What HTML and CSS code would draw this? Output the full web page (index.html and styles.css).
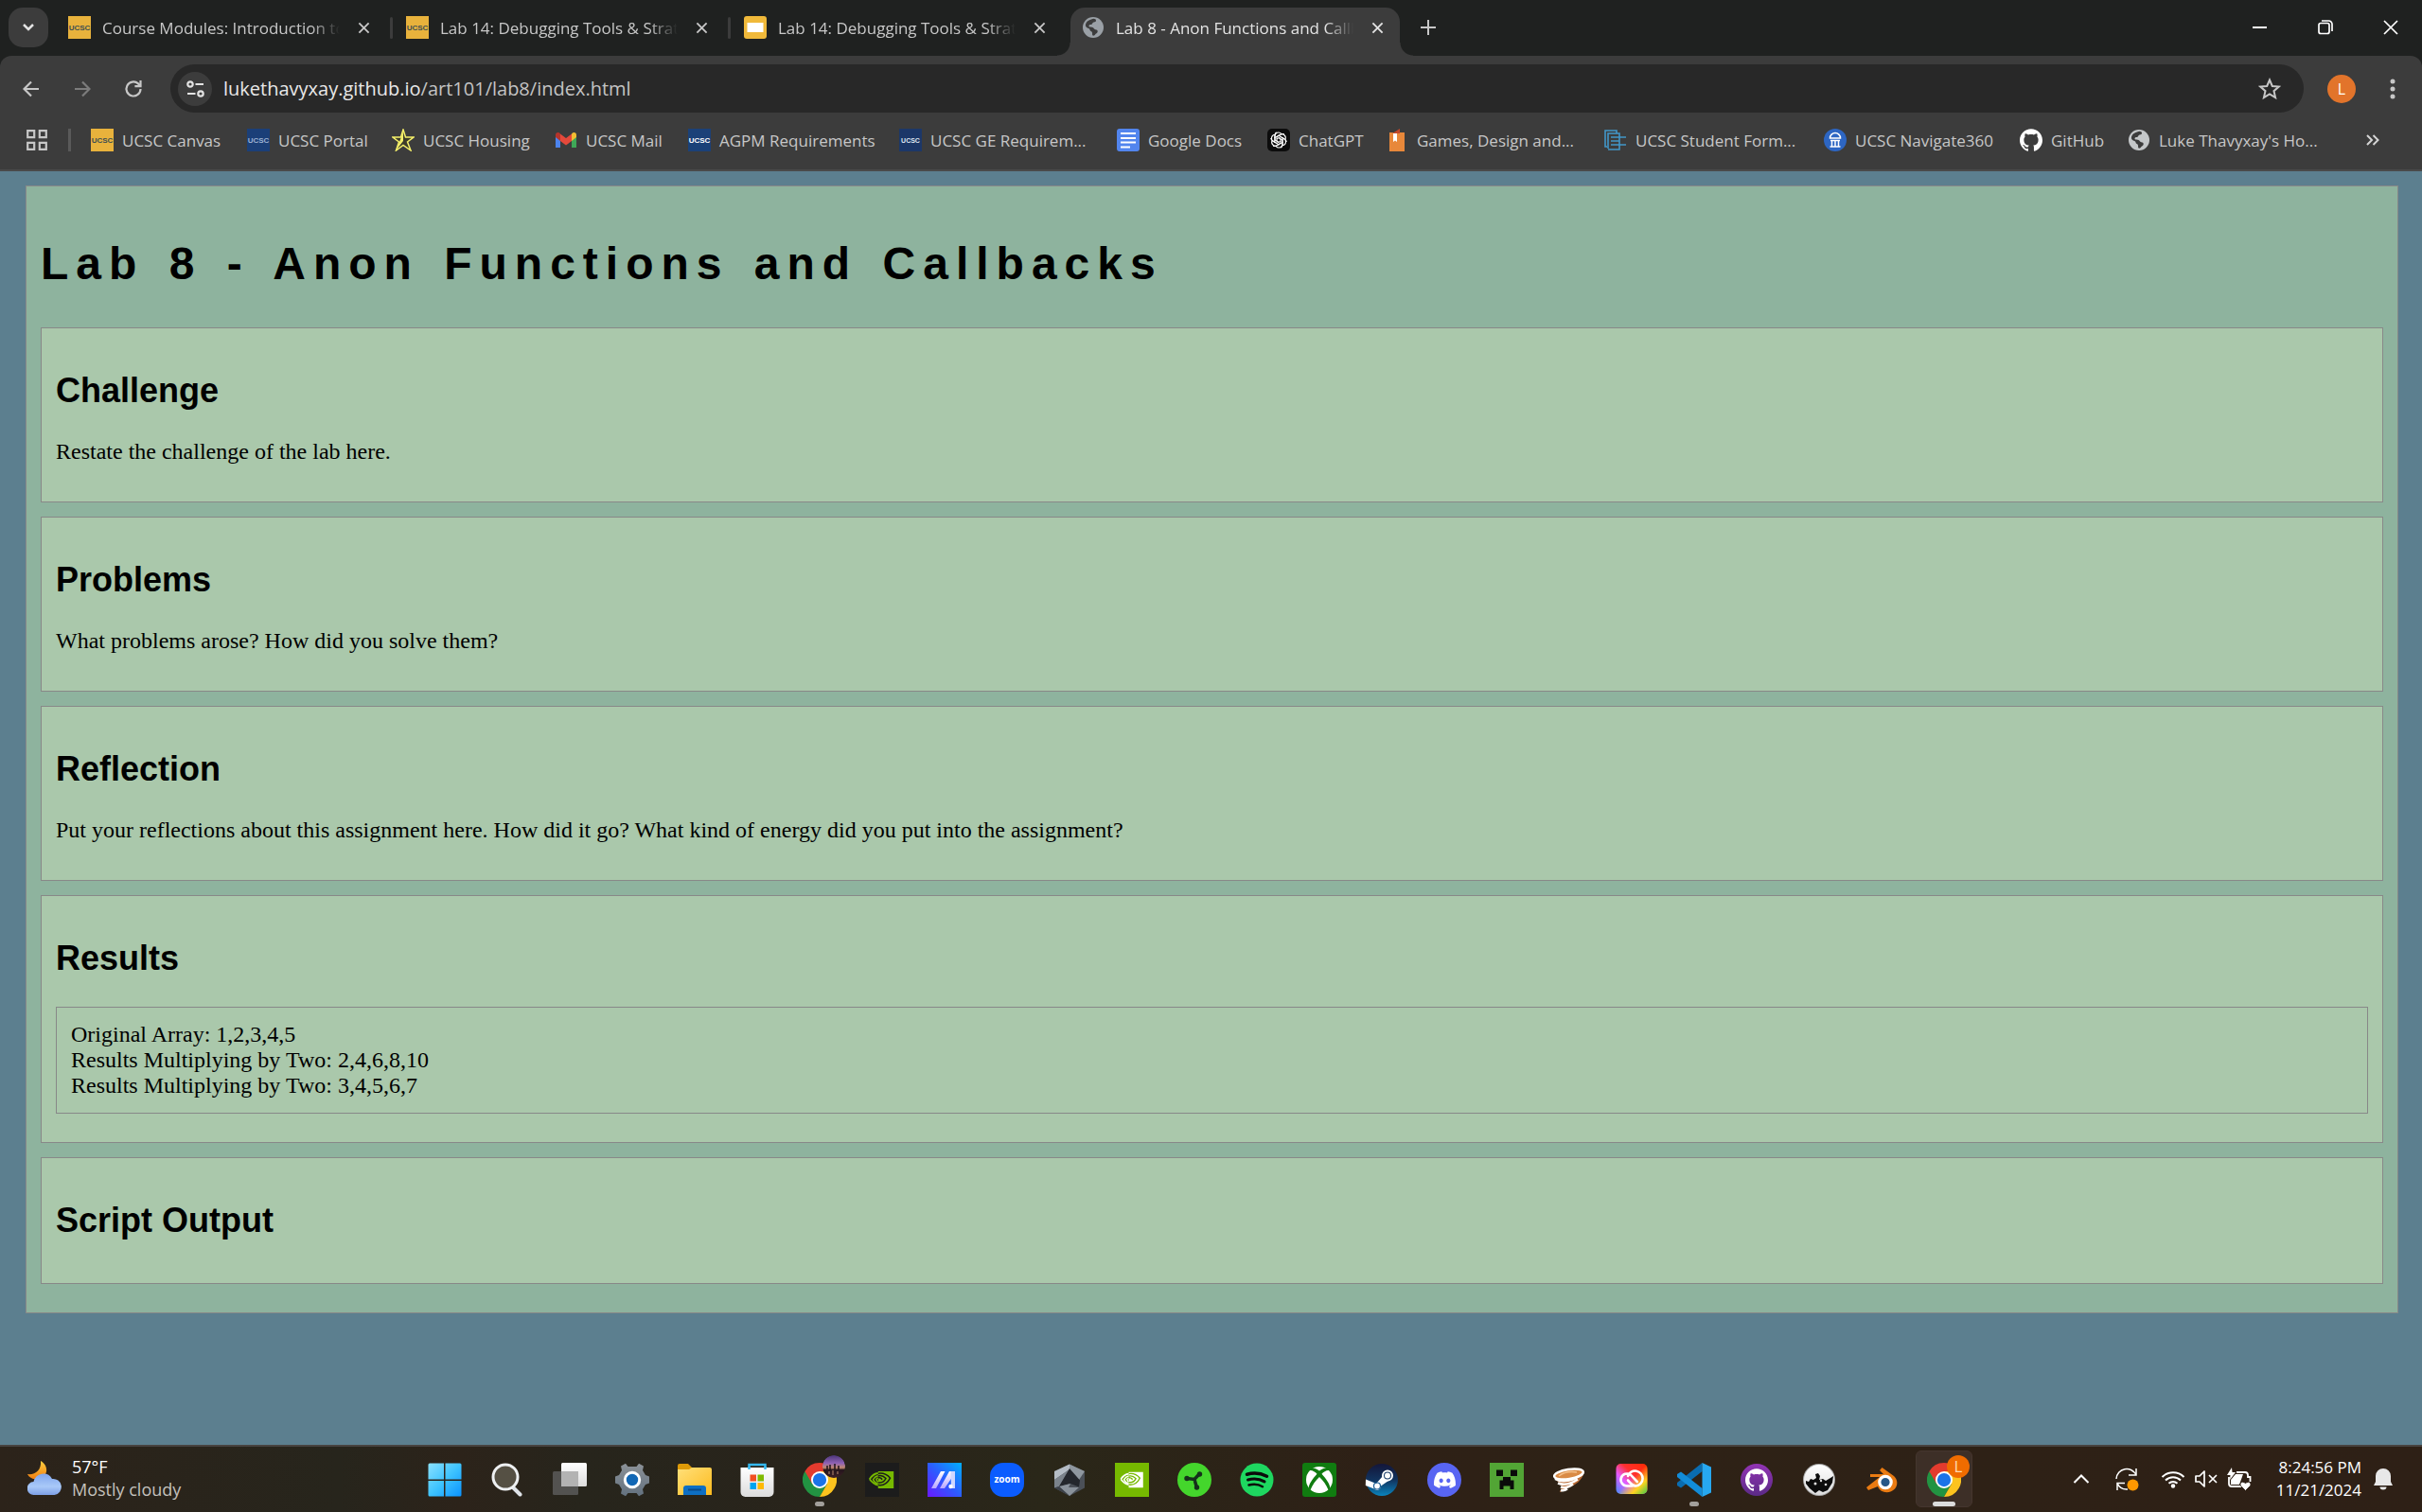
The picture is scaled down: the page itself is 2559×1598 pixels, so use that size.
FILE: index.html
```html
<!DOCTYPE html>
<html lang="en">
<head>
<meta charset="utf-8">
<title>Lab 8 - Anon Functions and Callbacks</title>
<link rel="stylesheet" href="styles.css">
</head>
<body>
<svg class="defs" aria-hidden="true">
  <defs>
    <linearGradient id="gWin" x1="0" y1="0" x2="1" y2="1"><stop offset="0" stop-color="#8be1ff"/><stop offset=".5" stop-color="#3fc4ff"/><stop offset="1" stop-color="#0a93ff"/></linearGradient>
    <linearGradient id="gWhite" x1="0" y1="0" x2="0" y2="1"><stop offset="0" stop-color="#fff"/><stop offset="1" stop-color="#dcdcdc"/></linearGradient>
    <linearGradient id="gFolder" x1="0" y1="0" x2="1" y2="1"><stop offset="0" stop-color="#ffe07a"/><stop offset="1" stop-color="#fdbb1f"/></linearGradient>
    <linearGradient id="gGear" x1="0" y1="0" x2="0" y2="1"><stop offset="0" stop-color="#8c9298"/><stop offset="1" stop-color="#63717f"/></linearGradient>
    <linearGradient id="gArmoury" x1="0" y1="1" x2="1" y2="0"><stop offset="0" stop-color="#6a18ff"/><stop offset=".5" stop-color="#2c5cff"/><stop offset="1" stop-color="#00b0ff"/></linearGradient>
    <linearGradient id="gSlash" x1="0" y1="0" x2="0" y2="1"><stop offset="0" stop-color="#fff"/><stop offset="1" stop-color="#b9a6ff"/></linearGradient>
    <linearGradient id="gSteam" x1="0" y1="0" x2="0" y2="1"><stop offset="0" stop-color="#14163a"/><stop offset=".5" stop-color="#11335e"/><stop offset="1" stop-color="#0a84bd"/></linearGradient>
    <linearGradient id="gCC" x1="0" y1="1" x2="1" y2="0"><stop offset="0" stop-color="#3f8cff"/><stop offset=".35" stop-color="#e45bff"/><stop offset=".6" stop-color="#ff3030"/><stop offset="1" stop-color="#ff2a00"/></linearGradient>
    <linearGradient id="gCC2" x1="0" y1="0" x2="1" y2="1"><stop offset=".5" stop-color="#ffd21f" stop-opacity="0"/><stop offset=".75" stop-color="#ffd21f"/><stop offset="1" stop-color="#39c84a"/></linearGradient>
    <linearGradient id="gCloud" x1="0" y1="0" x2="0" y2="1"><stop offset="0" stop-color="#7fa5ee"/><stop offset=".6" stop-color="#a9c9f8"/><stop offset="1" stop-color="#7d9fe6"/></linearGradient>
    <linearGradient id="gMoon" x1="0" y1="0" x2="0" y2="1"><stop offset="0" stop-color="#ffcf3f"/><stop offset="1" stop-color="#f07f12"/></linearGradient>
    <linearGradient id="gDusk" x1="0" y1="0" x2="0" y2="1"><stop offset="0" stop-color="#4b3578"/><stop offset=".35" stop-color="#8f62b5"/><stop offset=".55" stop-color="#c38a70"/><stop offset=".65" stop-color="#24151c"/><stop offset="1" stop-color="#3c1f26"/></linearGradient>
    <linearGradient id="gPurple" x1="0" y1="0" x2="0" y2="1"><stop offset="0" stop-color="#9234b4"/><stop offset="1" stop-color="#5b2a86"/></linearGradient>
    <symbol id="x" viewBox="0 0 14 14"><path d="M1.500 1.500l11 11M12.500 1.500l-11 11" fill="none" stroke="currentColor" stroke-width="2"/></symbol>
    <symbol id="globe" viewBox="0 0 24 24"><circle cx="12" cy="12" r="11" fill="currentColor"/><path d="M10 3.500c2.500-1.500 5-.5 5 1s-1 1.700-2.500 2c-1.600.3-1 2.300-2.500 2.500-1.500.2-2.500 0-2.500 1.500s2.500.8 4 1.500c1.400.6 1.300 2 2.800 2.200 1.500.1 2.600.6 2.400 2.200-.2 1.700-2 1.800-2.600 3.200-.4 1-1.300 1.400-2.400 1-.9-.4-.5-2-.7-3.200-.3-1.500-2.300-1.400-2.500-3-.1-1.300-2.400-1.200-3.700-2.600-1.400-1.500-1-3.300.2-5.300C6 4.900 8 4.200 10 3.500z" fill="var(--hole)"/></symbol>
    <symbol id="github" viewBox="0 0 24 24"><path fill="currentColor" d="M12 .297c-6.630 0-12 5.373-12 12 0 5.303 3.438 9.800 8.205 11.385.6.113.82-.258.82-.577 0-.285-.01-1.040-.015-2.040-3.338.724-4.042-1.610-4.042-1.610C4.422 18.070 3.633 17.700 3.633 17.700c-1.087-.744.084-.729.084-.729 1.205.084 1.838 1.236 1.838 1.236 1.070 1.835 2.809 1.305 3.495.998.108-.776.417-1.305.76-1.605-2.665-.3-5.466-1.332-5.466-5.930 0-1.310.465-2.380 1.235-3.220-.135-.303-.54-1.523.105-3.176 0 0 1.005-.322 3.300 1.230.96-.267 1.980-.399 3-.405 1.020.006 2.040.138 3 .405 2.280-1.552 3.285-1.230 3.285-1.230.645 1.653.24 2.873.12 3.176.765.84 1.230 1.910 1.230 3.220 0 4.610-2.805 5.625-5.475 5.920.42.36.81 1.096.81 2.220 0 1.606-.015 2.896-.015 3.286 0 .315.21.69.825.57C20.565 22.092 24 17.592 24 12.297c0-6.627-5.373-12-12-12"/></symbol>
    <symbol id="chrome" viewBox="0 0 48 48"><path d="M24 24L3.215 12A24 24 0 0 0 24 48l10.400-18z" fill="#229342"/><path d="M24 24V12h20.785A24 24 0 0 1 24 48l10.400-18z" fill="#fcc31e"/><path d="M24 12h20.785A24 24 0 0 0 3.215 12l10.400 18z" fill="#e33b2e"/><circle cx="24" cy="24" r="12" fill="#fff"/><circle cx="24" cy="24" r="9.500" fill="#1a73e8"/></symbol>
    <symbol id="nveye" viewBox="0 0 36 26"><path d="M13 1h22v24H13z" fill="var(--a)"/><path d="M1 12C5 6 10 3.500 16 3.500c6 0 11 3 14 7-3 6-8 10-14 10S5 17 1 12z" fill="none" stroke="var(--b)" stroke-width="2"/><path d="M1 12C5 6 9 4 13 3.700M13 20.500C8 19.500 4 16 1 12" fill="none" stroke="var(--a)" stroke-width="2.500"/><path d="M6 12.500c3-4 6-5.500 10-5.500 4 0 6 2 8 4-2 4-5 6-8.500 6-3 0-5-2-5-4.500 1-2 3-3 5-2.500 2 .4 2.500 2 3.500 2.500" fill="none" stroke="var(--b)" stroke-width="2"/><path d="M13 7.200c-3 .5-5 2-7 5.300 1.500 3.500 4 5.500 7 5.800M13 10.200c-1.500.5-2 1.300-2.500 2.300.4 1.500 1.200 2.700 2.500 3.600" fill="none" stroke="var(--a)" stroke-width="2"/></symbol>
  </defs>
</svg>

<header class="browser">
  <div class="tabstrip">
    <button class="tabsearch" aria-label="Search tabs"><svg width="14" height="10" viewBox="0 0 14 10"><path d="M2 2l5 5 5-5" fill="none" stroke="#e3e3e3" stroke-width="2.500"/></svg></button>
    <div class="tabs">
      <div class="tab">
        <svg class="fav" viewBox="0 0 24 24"><path fill="#e8b23c" d="M0 0h24v24H0z"/><text x="12" y="15" class="ucsc ucsc-dark">UCSC</text></svg>
        <span class="title">Course Modules: Introduction to</span>
        <button class="close" aria-label="Close tab"><svg width="13" height="13"><use href="#x"/></svg></button>
      </div>
      <div class="tab">
        <svg class="fav" viewBox="0 0 24 24"><path fill="#e8b23c" d="M0 0h24v24H0z"/><text x="12" y="15" class="ucsc ucsc-dark">UCSC</text></svg>
        <span class="title">Lab 14: Debugging Tools &amp; Strategies</span>
        <button class="close" aria-label="Close tab"><svg width="13" height="13"><use href="#x"/></svg></button>
      </div>
      <div class="tab last">
        <svg class="fav" viewBox="0 0 24 24"><rect width="24" height="24" rx="3" fill="#f0b93a"/><rect x="3.500" y="7" width="17" height="10" fill="#fff"/></svg>
        <span class="title">Lab 14: Debugging Tools &amp; Strategies</span>
        <button class="close" aria-label="Close tab"><svg width="13" height="13"><use href="#x"/></svg></button>
      </div>
      <div class="tab active">
        <svg class="fav globe" viewBox="0 0 24 24"><use href="#globe"/></svg>
        <span class="title">Lab 8 - Anon Functions and Callbacks</span>
        <button class="close" aria-label="Close tab"><svg width="13" height="13"><use href="#x"/></svg></button>
      </div>
    </div>
    <button class="newtab" aria-label="New tab"><svg width="16" height="16" viewBox="0 0 16 16"><path d="M8 0v16M0 8h16" stroke="#c7c7c7" stroke-width="2"/></svg></button>
    <div class="wincontrols">
      <button aria-label="Minimize"><svg width="16" height="16" viewBox="0 0 16 16"><path d="M0 8h15" stroke="#fff" stroke-width="2"/></svg></button>
      <button aria-label="Restore"><svg width="16" height="16" viewBox="0 0 16 16"><rect x="1" y="3.500" width="11" height="11" rx="2" fill="none" stroke="#fff" stroke-width="1.700"/><path d="M4 1h7.500A3.500 3.500 0 0 1 15 4.500V12" fill="none" stroke="#fff" stroke-width="1.700"/></svg></button>
      <button aria-label="Close"><svg width="16" height="16" viewBox="0 0 16 16"><path d="M1 1l14 14M15 1L1 15" stroke="#fff" stroke-width="1.700"/></svg></button>
    </div>
  </div>

  <div class="toolbar">
    <button class="nav" aria-label="Back"><svg width="18" height="18" viewBox="0 0 18 18"><path d="M17 9H2M9 1.500L1.500 9 9 16.500" fill="none" stroke="#c7c7c7" stroke-width="2.200"/></svg></button>
    <button class="nav" aria-label="Forward"><svg width="18" height="18" viewBox="0 0 18 18"><path d="M1 9h15M9 1.500L16.500 9 9 16.500" fill="none" stroke="#7c7c7c" stroke-width="2.200"/></svg></button>
    <button class="nav" aria-label="Reload"><svg width="20" height="20" viewBox="0 0 20 20"><path d="M17.500 10A7.500 7.500 0 1 1 15 4.400L17.500 7" fill="none" stroke="#c7c7c7" stroke-width="2.200"/><path d="M18.600 1v7.200h-7.200V6h5V1z" fill="#c7c7c7"/></svg></button>
    <div class="omnibox">
      <button class="siteinfo" aria-label="Site information"><svg width="19" height="18" viewBox="0 0 19 18"><g fill="none" stroke="#e3e3e3" stroke-width="2.200"><circle cx="4" cy="4" r="2.700"/><path d="M9.500 4H18M1 14h8.500"/><circle cx="15" cy="14" r="2.700"/></g></svg></button>
      <div class="url">lukethavyxay.github.io<span>/art101/lab8/index.html</span></div>
      <button class="star" aria-label="Bookmark this tab"><svg width="24" height="24" viewBox="0 0 24 24"><path d="M12 2.500l2.800 6.500 7 .6-5.300 4.600 1.600 6.900-6.100-3.600-6.100 3.600 1.600-6.900L2.200 9.600l7-.6z" fill="none" stroke="#c7c7c7" stroke-width="2"/></svg></button>
    </div>
    <button class="avatar" aria-label="Profile">L</button>
    <button class="menu" aria-label="Menu"><svg width="6" height="22" viewBox="0 0 6 22"><g fill="#c7c7c7"><circle cx="3" cy="3" r="2.500"/><circle cx="3" cy="11" r="2.500"/><circle cx="3" cy="19" r="2.500"/></g></svg></button>
  </div>

  <nav class="bookmarks">
    <button class="apps" aria-label="Apps"><svg width="22" height="22" viewBox="0 0 22 22"><path d="M1.200 1.200h7v7h-7zM13.800 1.200h7v7h-7zM1.200 13.800h7v7h-7zM13.800 13.800h7v7h-7z" fill="none" stroke="#c7c7c7" stroke-width="2.200"/></svg></button>
    <div class="marks">
      <a href="#"><svg viewBox="0 0 24 24"><path fill="#e8b23c" d="M0 0h24v24H0z"/><text x="12" y="15" class="ucsc ucsc-dark">UCSC</text></svg>UCSC Canvas</a>
      <a href="#"><svg viewBox="0 0 24 24"><path fill="#1b3f78" d="M0 0h24v24H0z"/><text x="12" y="15" class="ucsc ucsc-soft">UCSC</text></svg>UCSC Portal</a>
      <a href="#"><svg viewBox="0 0 24 24"><path d="M12 1l2.500 8H23l-6.500 5L20 23l-8-5.500L4.500 23l3-9L1 9h8.500z" fill="#3e3d2a" stroke="#f5f06a" stroke-width="1.500"/><path d="M12 3v10l-7 9 3-8z" fill="#f5f06a"/></svg>UCSC Housing</a>
      <a href="#"><svg viewBox="0 0 24 24"><path fill="#4c84ee" d="M1 7v13h5V9z"/><path fill="#3fa757" d="M23 7v13h-5V9z"/><path fill="#f2bd32" d="M18 5.500c2-2.500 5-1.500 5 1V9l-5 4z"/><path fill="#b5342b" d="M1 9V6.500C1 4 4 3 6 5.500V13z"/><path fill="#e5493b" d="M6 5.500l6 4.500 6-4.500V13l-6 4.500L6 13z"/></svg>UCSC Mail</a>
      <a href="#"><svg viewBox="0 0 24 24"><path fill="#1b4178" d="M0 0h24v24H0z"/><text x="12" y="15" class="ucsc ucsc-white">UCSC</text></svg>AGPM Requirements</a>
      <a href="#"><svg viewBox="0 0 24 24"><path fill="#1c3768" d="M0 0h24v24H0z"/><text x="12" y="15" class="ucsc ucsc-small">UCSC</text></svg>UCSC GE Requirem...</a>
      <a href="#"><svg viewBox="0 0 24 24"><rect width="24" height="24" rx="3" fill="#5285ee"/><path d="M4 5h16M4 10h16M4 14.500h16M4 19.500h10" stroke="#fff" stroke-width="2"/></svg>Google Docs</a>
      <a href="#"><svg viewBox="0 0 24 24"><rect width="24" height="24" rx="5" fill="#0c0c0c"/><g fill="none" stroke="#fff" stroke-width="1.100"><path id="k" d="M7.800 15V8a4 4 0 0 1 7-2.600M10 13.200V8.700l4.500-2.600a4 4 0 0 1 3.400-.3"/><use href="#k" transform="rotate(60 12 12)"/><use href="#k" transform="rotate(120 12 12)"/><use href="#k" transform="rotate(180 12 12)"/><use href="#k" transform="rotate(240 12 12)"/><use href="#k" transform="rotate(300 12 12)"/></g></svg>ChatGPT</a>
      <a href="#"><svg viewBox="0 0 24 24"><path fill="#e8883a" d="M4 4h16v20H4z"/><path fill="#c2482a" d="M7 5l8-5v5z"/><path fill="#fff" d="M8 5h4v9l-2-1.500L8 14z"/></svg>Games, Design and...</a>
      <a href="#"><svg viewBox="0 0 24 24"><g fill="none" stroke="#4296c8" stroke-width="1.600"><path d="M3 19H1V2h12v3M4 21V5h12v17H4M7 9h16M7 13h9M7 17h16"/></g></svg>UCSC Student Form...</a>
      <a href="#"><svg viewBox="0 0 24 24"><circle cx="12" cy="12" r="12" fill="#2d66c3"/><path d="M6.500 10a5.500 5.500 0 0 1 11 0zM7 12.500h10M6.500 19h11M8.500 12v6.500M12 12v6.500M15.500 12v6.500" fill="none" stroke="#fff" stroke-width="1.500"/></svg>UCSC Navigate360</a>
      <a href="#"><svg class="white" viewBox="0 0 24 24"><use href="#github"/></svg>GitHub</a>
      <a href="#"><svg class="globe light" viewBox="0 0 24 24"><use href="#globe"/></svg>Luke Thavyxay's Ho...</a>
    </div>
    <button class="more" aria-label="More bookmarks"><svg width="14" height="12" viewBox="0 0 14 12"><path d="M1 1l5 5-5 5M7.500 1l5 5-5 5" fill="none" stroke="#d5d5d5" stroke-width="2"/></svg></button>
  </nav>
</header>

<main class="page">
  <div class="content">
    <h1>Lab 8 - Anon Functions and Callbacks</h1>
    <section><h2>Challenge</h2><p>Restate the challenge of the lab here.</p></section>
    <section><h2>Problems</h2><p>What problems arose? How did you solve them?</p></section>
    <section><h2>Reflection</h2><p>Put your reflections about this assignment here. How did it go? What kind of energy did you put into the assignment?</p></section>
    <section><h2>Results</h2><div class="output">Original Array: 1,2,3,4,5<br>Results Multiplying by Two: 2,4,6,8,10<br>Results Multiplying by Two: 3,4,5,6,7</div></section>
    <section><h2>Script Output</h2></section>
  </div>
</main>

<footer class="taskbar">
  <button class="weather">
    <svg width="36" height="36" viewBox="0 0 36 36"><path d="M14 0c9 5 8 17-2 19-6 1-10-1-12-5 8 1 15-4 14-14z" fill="url(#gMoon)"/><path d="M7 36a7 7 0 0 1-.5-14A10.500 10.500 0 0 1 26 19a8.500 8.500 0 1 1 2.500 17z" fill="url(#gCloud)"/></svg>
    <span class="lines"><span>57°F</span><span class="dim">Mostly cloudy</span></span>
  </button>
  <div class="dock">
    <button aria-label="Start"><svg viewBox="0 0 36 36"><path d="M0.500 2a1.500 1.500 0 0 1 1.500-1.500h15v17H.5zM18.500.5H34a1.500 1.500 0 0 1 1.500 1.500v15.500h-17zM.5 19H17v16.500H2A1.500 1.500 0 0 1 .5 34zM18.500 19h17v15a1.500 1.500 0 0 1-1.500 1.500H18.500z" fill="url(#gWin)"/></svg></button>
    <button aria-label="Search"><svg viewBox="0 0 36 36"><path d="M23 25l8.500 8.500" stroke="#dfe3e8" stroke-width="4" stroke-linecap="round"/><circle cx="16" cy="15" r="13" fill="#555044" stroke="#eef0f2" stroke-width="3"/></svg></button>
    <button aria-label="Task View"><svg viewBox="0 0 36 36"><rect x="9" y="0" width="27" height="25" rx="1.500" fill="url(#gWhite)"/><rect x="0" y="9" width="27" height="25" rx="1.500" fill="#5e5e5e" opacity=".8"/><path d="M9 9h18v16H9z" fill="#b3b3b3"/></svg></button>
    <button aria-label="Settings"><svg viewBox="0 0 36 36"><path d="M13.500 4L11 .8 6 3.500l1 4.500-3 5-4 1.500v7L4 23l3 5-1 4.500 5 2.700 2.500-3.200h9l2.500 3.200 5-2.700-1-4.500 3-5 4-1.500v-7L32 13l-3-5 1-4.500L25 .8 22.500 4z" fill="url(#gGear)"/><circle cx="18" cy="18" r="7.700" fill="#1167b5" stroke="#fff" stroke-width="3"/></svg></button>
    <button aria-label="File Explorer"><svg viewBox="0 0 36 36"><path d="M0 3a2 2 0 0 1 2-2h9l4 4v5H0z" fill="#dd9a08"/><path d="M0 7h12l3-2h19a2 2 0 0 1 2 2v27H0z" fill="url(#gFolder)"/><path d="M6 34V27a3 3 0 0 1 3-3h18a3 3 0 0 1 3 3v7z" fill="#0d6fc4"/><path d="M11 28.500h14" stroke="#0a4a8a" stroke-width="2"/></svg></button>
    <button aria-label="Microsoft Store"><svg viewBox="0 0 36 36"><path d="M9.500 7V2h17v5" fill="none" stroke="#35b8ee" stroke-width="2.500"/><path d="M.5 5h35v26a5 5 0 0 1-5 5h-25a5 5 0 0 1-5-5z" fill="url(#gWhite)"/><path d="M9.500 7V4M26.500 7V4" stroke="#35b8ee" stroke-width="2.500"/><path d="M10.500 12.500H17v7h-6.500z" fill="#f25022"/><path d="M18.500 12.500H25v7h-6.500z" fill="#7fba00"/><path d="M10.500 21H17v7h-6.500z" fill="#00a4ef"/><path d="M18.500 21H25v7h-6.500z" fill="#ffb900"/></svg></button>
    <button class="running" aria-label="Google Chrome"><svg viewBox="0 0 36 36"><use href="#chrome"/></svg><svg class="badge" viewBox="0 0 24 24"><circle cx="12" cy="12" r="12" fill="url(#gDusk)"/><path d="M5 11v4M8 10v6M13 9v6M17 11v4" stroke="#1c1218" stroke-width="1.500"/><path d="M7 17v3M11 16v5M16 17v3" stroke="#b98a70" stroke-width="1"/></svg></button>
    <button aria-label="NVIDIA Control Panel"><svg viewBox="0 0 36 36"><path fill="#1c1c1c" d="M0 0h36v36H0z"/><svg class="nv-green" x="4" y="8" width="27" height="20" viewBox="0 0 36 26"><use href="#nveye"/></svg></svg></button>
    <button aria-label="MyASUS"><svg viewBox="0 0 36 36"><path fill="url(#gArmoury)" d="M0 0h36v36H0z"/><path d="M4 27L14 9h4.500L9 27zM13 27L23 9h6v6l-3.500 1L18 27z" fill="url(#gSlash)"/><path d="M24.500 9H29v18h-4z" fill="#cfd6ff"/><circle cx="24.500" cy="25" r="2.200" fill="#fff"/></svg></button>
    <button aria-label="Zoom"><svg viewBox="0 0 36 36"><rect width="36" height="36" rx="14" fill="#0b5cff"/><text x="18" y="21" class="zoomtext">zoom</text></svg></button>
    <button aria-label="Armoury Crate"><svg viewBox="0 0 36 36"><path d="M18 1.500l16 7.500v17.500L18 35 2 26.500V9z" fill="#4b5058"/><path d="M18 1.500L2 9v9l16-11z" fill="#b4bcc5"/><path d="M18 1.500L34 9l-6 9L18 7z" fill="#8f979f"/><path d="M2 18v8.500L7 25 18 7z" fill="#7b838c"/><path d="M18 6L7 25l12-3 9 3.500 1-7z" fill="#24272d"/><path d="M7 25l12-3-2 4 11 0-10 9z" fill="#8a929b"/><path d="M2 26.500L7 25l11 10z" fill="#3c4149"/></svg></button>
    <button aria-label="NVIDIA"><svg viewBox="0 0 36 36"><path fill="#76b900" d="M0 0h36v36H0z"/><svg class="nv-white" x="5" y="9" width="26" height="18" viewBox="0 0 36 26"><use href="#nveye"/></svg></svg></button>
    <button aria-label="Razer"><svg viewBox="0 0 36 36"><circle cx="18" cy="18" r="18" fill="#44d62c"/><path d="M10 16.500l8 1 5.500-6M18 17.500l2.500 9" fill="none" stroke="#15301b" stroke-width="3.500"/><circle cx="10" cy="16.500" r="2.700" fill="#15301b"/><circle cx="23.500" cy="12" r="2.700" fill="#15301b"/><circle cx="20.500" cy="26" r="2.700" fill="#15301b"/></svg></button>
    <button aria-label="Spotify"><svg viewBox="0 0 36 36"><circle cx="18" cy="18" r="17.500" fill="#1ed760"/><g fill="none" stroke="#0b0b0b" stroke-linecap="round"><path d="M7.500 12.200c7-2 14.500-1.300 21 2" stroke-width="3.500"/><path d="M8.500 18c6-1.700 12.500-1 17.500 1.900" stroke-width="3"/><path d="M9.500 23.500c5-1.400 10.500-.8 14.500 1.700" stroke-width="2.500"/></g></svg></button>
    <button aria-label="Xbox"><svg viewBox="0 0 36 36"><rect width="36" height="36" rx="3" fill="#107c10"/><circle cx="18" cy="18" r="14" fill="#fff"/><path d="M9.500 5.500C13 5 16 7 18 8.600 20 7 23 5 26.500 5.500l2 2.500c-3-.5-6 1.500-8 3.700 4.500 5 8.500 10.300 9 15.300l-2 1.800C25.500 23.500 22 18.500 18 15c-4 3.500-7.500 8.500-9.500 13.800L6.500 27c.5-5 4.500-10.300 9-15.300-2-2.200-5-4.200-8-3.700z" fill="#107c10"/></svg></button>
    <button aria-label="Steam"><svg viewBox="0 0 36 36"><circle cx="18" cy="18" r="17" fill="url(#gSteam)"/><path d="M1 17.500l11 4.500 7-8 6 5-8 5.500c0 4-4 6-7 3L.8 24z" fill="#fff"/><circle cx="24" cy="13.500" r="5" fill="#173a66" stroke="#fff" stroke-width="2"/><circle cx="24" cy="13.500" r="3" fill="#fff"/><circle cx="13" cy="24.500" r="3.500" fill="none" stroke="#1a5c92" stroke-width="1.200"/></svg></button>
    <button aria-label="Discord"><svg viewBox="0 0 36 36"><circle cx="18" cy="18" r="18" fill="#5865f2"/><svg x="7" y="6.500" width="23" height="23" viewBox="0 0 24 24"><path fill="#fff" fill-rule="evenodd" d="M20.317 4.370a19.791 19.791 0 0 0-4.885-1.515.074.074 0 0 0-.079.037c-.211.375-.445.865-.608 1.250-1.845-.276-3.680-.276-5.487 0-.164-.393-.406-.874-.618-1.250a.077.077 0 0 0-.079-.037 19.736 19.736 0 0 0-4.885 1.515C.533 9.046-.319 13.580.099 18.058c2.053 1.564 4.072 2.479 6.024 3.085.462-.63.957-1.323 1.310-2.022-.694-.353-1.316-.655-1.914-.998l.364-.419c3.928 1.793 8.258 1.783 12.139 0l.451.302c-.504.525-1.178.872-1.873 1.128.32.804.731 1.469 1.184 2.100 2.045-.578 4.034-1.494 6.087-3.001.5-5.177-.869-9.877-3.554-13.863zM8.020 15.331c-1.183 0-2.157-1.086-2.157-2.419s.956-2.419 2.157-2.419c1.211 0 2.176 1.095 2.157 2.419 0 1.333-.956 2.419-2.157 2.419zm7.975 0c-1.183 0-2.157-1.086-2.157-2.419s.955-2.419 2.157-2.419c1.211 0 2.176 1.095 2.157 2.419 0 1.333-.946 2.419-2.157 2.419z"/></svg></svg></button>
    <button aria-label="Minecraft Launcher"><svg viewBox="0 0 36 36"><path fill="#52a535" d="M0 0h36v36H0z"/><path fill="#0a0a0a" d="M7 7.500h7v6.500H7zM22 7.500h7v6.500h-7zM14 15h8v3.500h3.500V28h-4v-3.500h-7V28h-4v-9.500H14z"/></svg></button>
    <button aria-label="Tornado"><svg viewBox="0 0 36 36"><path d="M2 14c1 4 5 6 7 9 2 3 0 5-1 8 4-1 7-3 9-5 8-2 15-8 17-17z" fill="#b96a35"/><path d="M3 17c9 5 20 1 29-5M6 21.500c8 3 15 0 21-4M9 25.500c5 2 9 0 13-3M9 29c3 1 5 0 7-1.500" fill="none" stroke="#fff" stroke-width="2.500"/><ellipse cx="17.500" cy="12" rx="15.500" ry="5" transform="rotate(-9 17.500 12)" fill="#d98a45" stroke="#fff" stroke-width="2.500"/><path d="M7 14c5-4 12-5 19-4" stroke="#f4c08a" stroke-width="1.500" fill="none"/></svg></button>
    <button aria-label="Creative Cloud"><svg viewBox="0 0 36 36"><rect x="1.500" y="1" width="33" height="32" rx="5" fill="url(#gCC)"/><rect x="1.500" y="1" width="33" height="32" rx="5" fill="url(#gCC2)"/><path d="M18.500 24.500H13a6.500 6.500 0 1 1 3.800-11.800l7 7.300M14 14a8 8 0 1 1 8.500 10.500c-4 0-5-2.500-8.500-6" fill="none" stroke="#fff" stroke-width="2.600" stroke-linecap="round"/></svg></button>
    <button class="running" aria-label="Visual Studio Code"><svg viewBox="0 0 36 36"><path d="M26.500 0v9L4 26.500 0 24v-3z" fill="#0a6cb0"/><path d="M26.500 36v-9L4 9.500 0 12v3z" fill="#128cd9"/><path d="M26.500 0L36 4.500v27L26.500 36z" fill="#27a8f0"/></svg></button>
    <button aria-label="GitHub Desktop"><svg viewBox="0 0 36 36"><circle cx="18" cy="18" r="17" fill="url(#gPurple)"/><svg class="white" x="6" y="6" width="24" height="24" viewBox="0 0 24 24"><use href="#github"/></svg></svg></button>
    <button aria-label="Moon"><svg viewBox="0 0 36 36"><circle cx="18" cy="18" r="17" fill="#a9a9a9"/><circle cx="18" cy="18" r="16" fill="url(#gWhite)"/><path d="M4 19l3 1 2-3 3 1 3-2-1-4 3-1 2 3-1 4 4-1 3 2 5-3 3-2-1 7-5 8-5 2-4-2-4 3-6-5-4-5z" fill="#0c0c0c"/><circle cx="14" cy="22" r="1.500" fill="#ddd"/><circle cx="20" cy="19" r="1.200" fill="#ddd"/><circle cx="25" cy="23" r="1.300" fill="#ddd"/></svg></button>
    <button aria-label="Blender"><svg viewBox="0 0 36 36"><path d="M2 26l14-11H6v-3h14l-4-4 2.500-3L31 14c4 3.500 4.500 9.500 1 13.500-5 5.500-15 5-18-2.500L4 29z" fill="#ea7b12"/><circle cx="22" cy="20.500" r="6.200" fill="#265787" stroke="#fff" stroke-width="3.200"/></svg></button>
    <button class="running current" aria-label="Google Chrome, Lab 8"><svg viewBox="0 0 36 36"><use href="#chrome"/></svg><span class="badge letter">L</span></button>
  </div>
  <div class="tray">
    <button aria-label="Show hidden icons"><svg width="18" height="18" viewBox="0 0 18 18"><path d="M1.500 13L9 5.500l7.500 7.500" fill="none" stroke="#fff" stroke-width="2"/></svg></button>
    <button class="sync" aria-label="Updates"><svg width="26" height="26" viewBox="0 0 26 26"><path d="M2 13A11 11 0 0 1 23 9M23 2v7h-8M14 24A11 11 0 0 1 3 17.500M3 25v-7.500h8" fill="none" stroke="#fff" stroke-width="1.500"/><circle cx="19.500" cy="19.500" r="6" fill="#ff9800"/></svg></button>
    <button class="status" aria-label="Network, volume and battery">
      <svg width="26" height="20" viewBox="0 0 26 20"><g fill="none" stroke="#fff" stroke-width="2"><path d="M1.500 8a16.300 16.300 0 0 1 23 0M5 11.500a11.300 11.300 0 0 1 16 0M8.500 14.800a6.500 6.500 0 0 1 9 0"/></g><circle cx="13" cy="17.500" r="2.200" fill="#fff"/></svg>
      <svg width="24" height="20" viewBox="0 0 24 20"><path d="M1 7h4l5-5v16l-5-5H1z" fill="none" stroke="#fff" stroke-width="1.700" stroke-linejoin="round"/><path d="M15 6l8 8M23 6l-8 8" stroke="#fff" stroke-width="1.700"/></svg>
      <svg width="26" height="26" viewBox="0 0 26 26"><path d="M10 6h9a3 3 0 0 1 3 3v2h2.500v5M2 11v7a3 3 0 0 0 3 3h10" fill="none" stroke="#fff" stroke-width="1.800"/><path d="M9 8h8l-4 11H4v-5z" fill="#fff"/><path d="M5 1L0 9h3.500L3 14l6-8H5.500z" fill="#fff"/><path d="M19.500 25.500l-5-5c-1.800-3 1.500-6 5-3 3.500-3 6.800 0 5 3z" fill="#fff" stroke="#2e2016" stroke-width="1"/></svg>
    </button>
    <button class="clock lines"><span>8:24:56 PM</span><span>11/21/2024</span></button>
    <button aria-label="Notifications"><svg width="20" height="24" viewBox="0 0 20 24"><path d="M10 1a8 8 0 0 1 8 8v6l2 4H0l2-4V9a8 8 0 0 1 8-8zM6.500 20.500h7a3.500 3 0 0 1-7 0z" fill="#e8e8e8"/></svg></button>
  </div>
</footer>
</body>
</html>
```
FILE: styles.css
```css
* { box-sizing: border-box; }
body {
  margin: 0;
  min-height: 100vh;
  display: flex;
  flex-direction: column;
  background: #5c7f8f;
  font-family: "Liberation Serif", serif;
}
button {
  margin: 0;
  padding: 0;
  border: 0;
  background: none;
  color: inherit;
  font: inherit;
  display: flex;
  align-items: center;
  justify-content: center;
  flex: none;
}
svg { display: block; flex: none; }
.defs { width: 0; height: 0; position: absolute; }
.ucsc { font: bold 8px "Liberation Sans", sans-serif; text-anchor: middle; }
.ucsc-dark { fill: #3d4d52; }
.ucsc-soft { fill: #9db2d3; }
.ucsc-white { fill: #fff; }
.ucsc-small { fill: #dfe6f0; font-size: 7px; }
.white { color: #fff; }
.globe { color: #9aa0a6; --hole: #3c3c3c; }
.globe.light { color: #c4c7c9; }

/* Browser frame */
.browser {
  background: #1f2120;
  color: #c7c7c7;
  font-family: "Open Sans", "Noto Sans", sans-serif;
  font-size: 17px;
}
.tabstrip { display: flex; height: 59px; padding: 8px 0 0 9px; }
.tabsearch { width: 42px; height: 42px; border-radius: 15px; background: #3c3c3c; }
.tabs { display: flex; margin-left: 9px; min-width: 0; }
.tab {
  position: relative;
  display: flex;
  align-items: center;
  width: 348px;
  height: 42px;
  margin-right: 9px;
  padding: 0 12px;
}
.tab::after {
  content: "";
  position: absolute;
  right: -7px;
  top: 10px;
  width: 3px;
  height: 23px;
  border-radius: 2px;
  background: #3c3c3c;
}
.tab.last::after { display: none; }
.tab.active {
  height: 51px;
  padding-bottom: 9px;
  margin-right: 0;
  border-radius: 15px 15px 0 0;
  background: #3c3c3c;
  color: #e3e3e3;
}
/* Flared feet of the active tab */
.tab.active::before, .tab.active::after {
  content: "";
  position: absolute;
  top: auto;
  bottom: 0;
  width: 14px;
  height: 14px;
  border-radius: 0;
}
.tab.active::before { left: -14px; background: radial-gradient(circle at 0 0, transparent 13px, #3c3c3c 14px); }
.tab.active::after { right: -14px; background: radial-gradient(circle at 100% 0, transparent 13px, #3c3c3c 14px); }
.fav { width: 24px; height: 24px; }
.title {
  flex: 1;
  margin: 0 13px 0 12px;
  padding-top: 2px;
  overflow: hidden;
  white-space: nowrap;
  line-height: 28px;
  -webkit-mask-image: linear-gradient(90deg, #000 calc(100% - 30px), transparent);
  mask-image: linear-gradient(90deg, #000 calc(100% - 30px), transparent);
}
.close { width: 24px; height: 24px; }
.newtab { width: 42px; height: 42px; margin-left: 9px; }
.wincontrols { display: flex; margin-left: auto; height: 42px; }
.wincontrols button { width: 69px; padding-left: 2px; }

.toolbar {
  display: flex;
  align-items: center;
  height: 69px;
  padding: 0 15px 0 6px;
  background: #3c3c3c;
  border-radius: 12px 12px 0 0;
}
.nav { width: 54px; height: 42px; }
.omnibox {
  display: flex;
  align-items: center;
  flex: 1;
  height: 51px;
  margin-left: 12px;
  padding: 0 24px 0 8px;
  border-radius: 26px;
  background: #282828;
}
.siteinfo { width: 36px; height: 36px; border-radius: 50%; background: #3c3c3c; }
.url { flex: 1; margin-left: 12px; font-size: 20px; line-height: 30px; color: #e8e8e8; }
.url span { color: #c3c3c3; }
.avatar {
  width: 30px;
  height: 30px;
  margin-left: 25px;
  border-radius: 50%;
  background: #e2742b;
  color: #fff;
  font-size: 16px;
}
.menu { width: 32px; height: 42px; margin-left: 23px; }

.bookmarks {
  display: flex;
  align-items: center;
  height: 53px;
  padding: 0 45px 11px 0;
  background: #3c3c3c;
  border-bottom: 2px solid #4a4a4a;
}
.apps { width: 72px; height: 24px; padding-left: 6px; }
.marks {
  display: grid;
  grid-template-columns: 165px 153px 172px 141px 223px 230px 159px 125px 231px 232px 207px 114px 1fr;
  flex: 1;
  padding-left: 21px;
  border-left: 3px solid #5a5a5a;
}
.marks a {
  display: flex;
  align-items: center;
  gap: 9px;
  height: 24px;
  color: #c7c7c7;
  text-decoration: none;
  white-space: nowrap;
}
.marks svg { width: 24px; height: 24px; }

/* Lab page */
.page { flex: 1; padding: 15px 25px 15px 27px; }
.content {
  padding: 54px 15px 15px;
  border: 1px solid #888;
  background: #8eb39e;
  font-size: 24px;
  line-height: 27px;
  color: #000;
}
h1, h2 { font-family: "Liberation Sans", Arial, sans-serif; font-weight: bold; }
h1 { margin: 0 0 40px; font-size: 48px; line-height: 55px; letter-spacing: 8px; word-spacing: 5px; }
h2 { margin: 30px 0; font-size: 36px; line-height: 42px; }
p { margin: 0 0 24px; }
section {
  display: flow-root;
  margin-bottom: 15px;
  padding: 15px;
  border: 1px solid #888;
  background: #aac8ab;
}
.output { margin-bottom: 15px; padding: 15px; border: 1px solid #888; }

/* Taskbar */
.taskbar {
  display: grid;
  grid-template-columns: 17% auto 1fr;
  height: 71px;
  border-top: 2px solid #474340;
  background: linear-gradient(90deg, #2c231a, #27251c 14%, #2c231a 19%, #27251c 24%, #29241b 35%, #2a2719 43%, #2e2016 57%, #2e2216 65%, #2e2016);
  color: #fff;
  font-family: "Open Sans", "Noto Sans", sans-serif;
  font-size: 17px;
}
.weather { justify-content: flex-start; gap: 11px; padding: 0 0 3px 29px; font-size: 18px; }
.lines { display: flex; flex-direction: column; align-items: flex-start; line-height: 24px; }
.dim { color: #c4c1bd; }
.dock { display: flex; padding-left: 2px; }
.dock button { position: relative; width: 66px; }
.dock button > svg { width: 36px; height: 36px; }
.dock button > .badge { position: absolute; left: 36px; top: 9px; width: 24px; height: 24px; border-radius: 50%; }
.letter { background: #f06c00; color: #ffd9b0; line-height: 24px; text-align: center; }
.running::after {
  content: "";
  position: absolute;
  left: 28px;
  bottom: 6px;
  width: 10px;
  height: 5px;
  border-radius: 3px;
  background: #a3a09c;
}
.current::before {
  content: "";
  position: absolute;
  inset: 4px 3px 5px;
  border: 1px solid #45362e;
  border-radius: 6px;
  background: #3d2f27;
}
.dock .current > svg { position: relative; }
.current::after { left: 21px; width: 24px; background: #dcdcdc; }
.nv-green { --a: #76b900; --b: #1c1c1c; }
.nv-white { --a: #fff; --b: #76b900; }
.zoomtext { font: bold 10px "Open Sans", sans-serif; fill: #fff; text-anchor: middle; }
.tray { display: flex; justify-content: flex-end; padding: 0 31px 2px 0; }
.tray .sync { margin: 0 19px 0 26px; }
.status { gap: 10px; margin: 0 26px 0 4px; }
.tray .clock { align-items: flex-end; margin-right: 13px; }
```
